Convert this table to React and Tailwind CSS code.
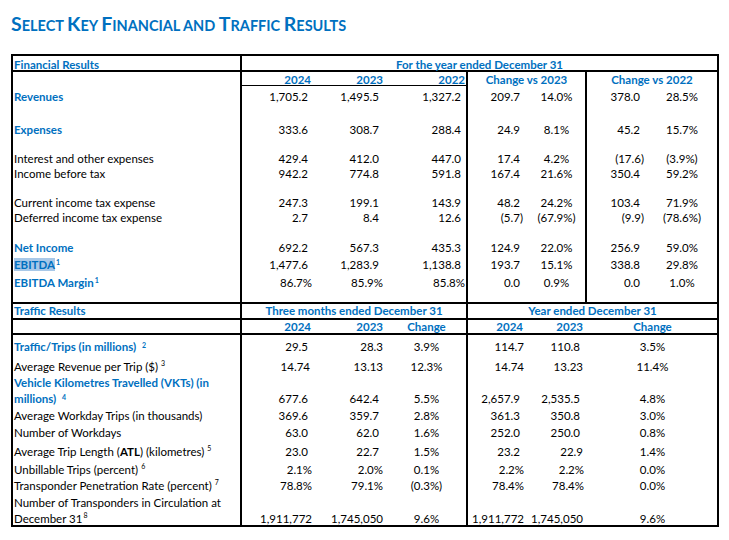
const BLUE = 'text-[#0070c0] font-bold'
const P0 = 'pr-0'
const P1 = 'pr-[1px]'
const P2 = 'pr-[2px]'
const P4 = 'pr-[4px]'

function Sup({ n, tight }) {
  return <sup className={`text-[7px] ${tight ? 'ml-[1px]' : 'ml-[3px]'}`}>{n}</sup>
}

function SC({ w, big = true }) {
  return (
    <>
      {big && <span className="text-[19.5px]">{w[0]}</span>}
      <span className="text-[14.5px]">{(big ? w.slice(1) : w).toUpperCase()}</span>
    </>
  )
}

const fin = [
  { h: 'h-[2px]' },
  { h: 'h-[16px]', label: <span className={BLUE}>Revenues</span>, v: ['1,705.2', '1,495.5', '1,327.2', '209.7', '14.0%', '378.0', '28.5%'] },
  { h: 'h-[17px]' },
  { h: 'h-[16px]', label: <span className={BLUE}>Expenses</span>, v: ['333.6', '308.7', '288.4', '24.9', '8.1%', '45.2', '15.7%'] },
  { h: 'h-[14px]' },
  { h: 'h-[15px]', label: 'Interest and other expenses', v: ['429.4', '412.0', '447.0', '17.4', '4.2%', '(17.6)', '(3.9%)'] },
  { h: 'h-[15px]', label: 'Income before tax', v: ['942.2', '774.8', '591.8', '167.4', '21.6%', '350.4', '59.2%'] },
  { h: 'h-[14px]' },
  { h: 'h-[15px]', label: 'Current income tax expense', v: ['247.3', '199.1', '143.9', '48.2', '24.2%', '103.4', '71.9%'] },
  { h: 'h-[15px]', label: 'Deferred income tax expense', v: ['2.7', '8.4', '12.6', '(5.7)', '(67.9%)', '(9.9)', '(78.6%)'] },
  { h: 'h-[15px]' },
  { h: 'h-[15px]', label: <span className={BLUE}>Net Income</span>, v: ['692.2', '567.3', '435.3', '124.9', '22.0%', '256.9', '59.0%'] },
  {
    h: 'h-[18px]',
    label: <span className={BLUE}><span className="bg-[#a8c8e8]">EBITDA</span><Sup n="1" tight /></span>,
    v: ['1,477.6', '1,283.9', '1,138.8', '193.7', '15.1%', '338.8', '29.8%'],
  },
  { h: 'h-[18px]', label: <span className={BLUE}>EBITDA Margin<Sup n="1" tight /></span>, v: ['86.7%', '85.9%', '85.8%', '0.0', '0.9%', '0.0', '1.0%'] },
  { h: 'flex-1' },
]

const trf = [
  { h: 'h-[23px]', label: <span className={BLUE}>Traffic/Trips (in millions) <Sup n="2" /></span>, v: [['29.5', P4], ['28.3', P0], '3.9%', ['114.7', P0], ['110.8', P4], '3.5%'] },
  { h: 'h-[17px]', label: <>Average Revenue per Trip ($) <Sup n="3" /></>, v: [['14.74', P2], ['13.13', P0], '12.3%', ['14.74', P0], ['13.23', P1], '11.4%'] },
  { h: 'h-[15px]', label: <span className={BLUE}>Vehicle Kilometres Travelled (VKTs) (in</span> },
  { h: 'h-[17px]', label: <span className={BLUE}>millions) <Sup n="4" /></span>, v: [['677.6', P4], ['642.4', P4], '5.5%', ['2,657.9', P4], ['2,535.5', P4], '4.8%'] },
  { h: 'h-[16px]', label: 'Average Workday Trips (in thousands)', v: [['369.6', P4], ['359.7', P4], '2.8%', ['361.3', P4], ['350.8', P4], '3.0%'] },
  { h: 'h-[18px]', label: 'Number of Workdays', v: [['63.0', P4], ['62.0', P4], '1.6%', ['252.0', P4], ['250.0', P4], '0.8%'] },
  { h: 'h-[20px]', label: <>Average Trip Length (<b>ATL</b>) (kilometres) <Sup n="5" /></>, v: [['23.0', P4], ['22.7', P4], '1.5%', ['23.2', P4], ['22.9', P1], '1.4%'] },
  { h: 'h-[16px]', label: <>Unbillable Trips (percent) <Sup n="6" /></>, v: [['2.1%', P0], ['2.0%', P0], '0.1%', ['2.2%', P0], ['2.2%', P0], '0.0%'] },
  { h: 'h-[16px]', label: <>Transponder Penetration Rate (percent) <Sup n="7" /></>, v: [['78.8%', P0], ['79.1%', P0], '(0.3%)', ['78.4%', P0], ['78.4%', P0], '0.0%'] },
  { h: 'h-[18px]', label: 'Number of Transponders in Circulation at' },
  { h: 'flex-1 items-end', label: <>December 31<Sup n="8" tight /></>, v: [['1,911,772', P0], ['1,745,050', P0], '9.6%', ['1,911,772', P0], ['1,745,050', P1], '9.6%'] },
]

function FinRow({ h, label, v }) {
  const yp = (s) => (s.endsWith('%') ? P0 : P4)
  const cp = (s) => (s.startsWith('(') ? P0 : 'pr-[3px]')
  const dp = (s) => (s.startsWith('(') ? P0 : P4)
  return (
    <div className={`flex ${h}`}>
      <div className="w-[229px] border-r-2 border-black pl-[1px] flex items-center whitespace-nowrap">{label}</div>
      <div className="w-[226px] border-r-2 border-black flex items-center">
        {v && (
          <>
            <div className={`w-[70px] text-right ${yp(v[0])}`}>{v[0]}</div>
            <div className={`w-[71px] text-right ${yp(v[1])}`}>{v[1]}</div>
            <div className={`w-[82px] text-right ${yp(v[2])}`}>{v[2]}</div>
          </>
        )}
      </div>
      <div className="w-[119px] border-r-2 border-black flex items-center">
        {v && (
          <>
            <div className={`w-[55px] text-right ${cp(v[3])}`}>{v[3]}</div>
            <div className="w-[62px] pl-[5px] text-center">{v[4]}</div>
          </>
        )}
      </div>
      <div className="w-[130px] flex items-center">
        {v && (
          <>
            <div className={`w-[57px] text-right ${dp(v[5])}`}>{v[5]}</div>
            <div className="w-[73px] pl-[3px] text-center">{v[6]}</div>
          </>
        )}
      </div>
    </div>
  )
}

function TrfRow({ h, label, v }) {
  return (
    <div className={`flex items-center ${h}`}>
      <div className="w-[229px] self-stretch border-r-2 border-black pl-[1px] flex items-center whitespace-nowrap">{label}</div>
      <div className="w-[226px] self-stretch border-r-2 border-black flex items-center">
        {v && (
          <>
            <div className={`w-[70px] text-right ${v[0][1]}`}>{v[0][0]}</div>
            <div className={`w-[71px] text-right ${v[1][1]}`}>{v[1][0]}</div>
            <div className="w-[83px] pl-[4px] text-center">{v[2]}</div>
          </>
        )}
      </div>
      <div className="flex-1 self-stretch flex items-center">
        {v && (
          <>
            <div className={`w-[56px] text-right ${v[3][1]}`}>{v[3][0]}</div>
            <div className={`w-[60px] text-right ${v[4][1]}`}>{v[4][0]}</div>
            <div className="flex-1 pl-[4px] text-center">{v[5]}</div>
          </>
        )}
      </div>
    </div>
  )
}

export default function App() {
  return (
    <div className="w-[729px] h-[540px] bg-white overflow-hidden font-['Lato',sans-serif] text-[11.5px] leading-[13px] text-black">
      <h1 className="h-[54px] pl-[11px] pt-[12px] leading-[24px] font-bold text-[#0070c0] whitespace-nowrap">
        <SC w="Select" /><span className="text-[14.5px]"> </span>
        <SC w="Key" /><span className="text-[14.5px]"> </span>
        <SC w="Financial" /><span className="text-[14.5px]"> </span>
        <SC w="and" big={false} /><span className="text-[14.5px]"> </span>
        <SC w="Traffic" /><span className="text-[14.5px]"> </span>
        <SC w="Results" />
      </h1>

      <div className="ml-[11px] w-[708px] border-2 border-black">
        {/* Financial header */}
        <div className="flex h-[16px] border-b-2 border-black leading-[10px]">
          <div className="w-[229px] border-r-2 border-black pl-[1px] flex items-end">
            <span className={BLUE}>Financial Results</span>
          </div>
          <div className={`flex-1 flex items-end justify-center ${BLUE}`}>For the year ended December 31</div>
        </div>
        <div className={`flex h-[14px] leading-[10px] ${BLUE}`}>
          <div className="w-[229px] border-r-2 border-black" />
          <div className="w-[226px] border-r-2 border-black flex items-end">
            <div className="w-[224px] h-full flex items-end border-b border-black">
              <div className="w-[70px] text-right pr-[1px]">2024</div>
              <div className="w-[71px] text-right">2023</div>
              <div className="w-[82px] text-right">2022</div>
            </div>
          </div>
          <div className="w-[119px] border-r-2 border-black flex items-end justify-center pb-[1px]">Change vs 2023</div>
          <div className="w-[130px] flex items-end justify-center pb-[1px]">Change vs 2022</div>
        </div>

        {/* Financial body */}
        <div className="h-[218px] flex flex-col border-b-2 border-black">
          {fin.map((r, i) => (
            <FinRow key={i} {...r} />
          ))}
        </div>

        {/* Traffic header */}
        <div className="flex h-[16px] border-b-2 border-black leading-[10px]">
          <div className="w-[229px] border-r-2 border-black pl-[1px] pb-[2px] flex items-end">
            <span className={BLUE}>Traffic Results</span>
          </div>
          <div className={`w-[226px] border-r-2 border-black pb-[2px] flex items-end justify-center ${BLUE}`}>Three months ended December 31</div>
          <div className={`flex-1 pb-[2px] flex items-end justify-center ${BLUE}`}>Year ended December 31</div>
        </div>
        <div className={`flex h-[15px] border-b-2 border-black leading-[10px] ${BLUE}`}>
          <div className="w-[229px] border-r-2 border-black" />
          <div className="w-[226px] border-r-2 border-black pb-[1px] flex items-end">
            <div className="w-[70px] text-right pr-[1px]">2024</div>
            <div className="w-[71px] text-right">2023</div>
            <div className="w-[83px] pl-[4px] text-center">Change</div>
          </div>
          <div className="flex-1 pb-[1px] flex items-end">
            <div className="w-[56px] text-right pr-[1px]">2024</div>
            <div className="w-[60px] text-right pr-[1px]">2023</div>
            <div className="flex-1 pl-[4px] text-center">Change</div>
          </div>
        </div>

        {/* Traffic body */}
        <div className="h-[190px] flex flex-col">
          {trf.map((r, i) => (
            <TrfRow key={i} {...r} />
          ))}
        </div>
      </div>
    </div>
  )
}
